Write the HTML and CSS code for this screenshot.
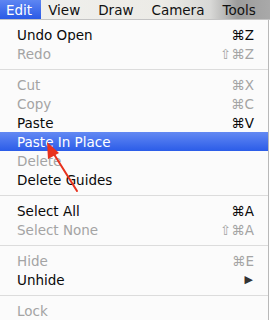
FILE: index.html
```html
<!DOCTYPE html>
<html>
<head>
<meta charset="utf-8">
<link rel="stylesheet" href="styles.css">
</head>
<body>
<div class="screen">
  <div class="menubar">
    <span class="title active">Edit</span>
    <span class="title">View</span>
    <span class="title">Draw</span>
    <span class="title">Camera</span>
    <span class="title">Tools</span>
  </div>
  <div class="menu">
    <div class="item"><span class="label">Undo Open</span><span class="key">⌘Z</span></div>
    <div class="item off"><span class="label">Redo</span><span class="key">⇧⌘Z</span></div>
    <div class="sep"></div>
    <div class="item off"><span class="label">Cut</span><span class="key">⌘X</span></div>
    <div class="item off"><span class="label">Copy</span><span class="key">⌘C</span></div>
    <div class="item"><span class="label">Paste</span><span class="key">⌘V</span></div>
    <div class="item hi"><span class="label">Paste In Place</span><span class="key"></span></div>
    <div class="item off"><span class="label">Delete</span><span class="key"></span></div>
    <div class="item"><span class="label">Delete Guides</span><span class="key"></span></div>
    <div class="sep"></div>
    <div class="item"><span class="label">Select All</span><span class="key">⌘A</span></div>
    <div class="item off"><span class="label">Select None</span><span class="key">⇧⌘A</span></div>
    <div class="sep"></div>
    <div class="item off"><span class="label">Hide</span><span class="key">⌘E</span></div>
    <div class="item"><span class="label">Unhide</span><span class="key sub">▶</span></div>
    <div class="sep"></div>
    <div class="item off"><span class="label">Lock</span><span class="key"></span></div>
  </div>
  <svg class="arrow" width="270" height="320" viewBox="0 0 270 320">
    <line x1="77" y1="191" x2="52" y2="151" stroke="#e8321e" stroke-width="2" stroke-linecap="round"/>
    <polygon points="47,142 59,153 48,159" fill="#e8321e"/>
  </svg>
</div>
</body>
</html>
```
FILE: styles.css
```css
html, body {
  margin: 0;
  padding: 0;
  background: #ffffff;
}
.screen {
  position: relative;
  width: 270px;
  height: 320px;
  overflow: hidden;
  font-family: "DejaVu Sans", "Liberation Sans", sans-serif;
  font-size: 13.5px;
}
.menubar {
  display: flex;
  height: 20px;
  align-items: stretch;
  background: linear-gradient(to right, #f1f1ef 0%, #ecebe6 60%, #d8d8d6 78%, #9c9c9c 88%, #a9a9a9 100%);
  border-bottom: 1px solid #c4c4c4;
  box-sizing: border-box;
}
.title {
  display: flex;
  align-items: center;
  padding: 0 9px;
  color: #111;
  line-height: 20px;
}
.title.active {
  color: #fff;
  padding: 0 9px 0 6px;
  margin-right: -2px;
  background: linear-gradient(#5e86f2, #2a5ae6);
}
.menu {
  display: flex;
  flex-direction: column;
  padding-top: 5px;
  background: #fbfbfb;
  border-right: 1px solid #b8b8b8;
  width: 268px;
  height: 300px;
}
.item {
  display: flex;
  justify-content: space-between;
  align-items: center;
  height: 19px;
  padding: 0 14px 0 17px;
  color: #0a0a0a;
  flex: none;
}
.item.off {
  color: #a4a4a4;
}
.item.hi {
  color: #fff;
  background: linear-gradient(#6389f3, #2b5ce8);
}
.key.sub {
  font-size: 11px;
  color: #333;
  padding-right: 1px;
}
.sep {
  height: 12px;
  flex: none;
  display: flex;
  align-items: center;
}
.sep::before {
  content: "";
  display: block;
  width: 100%;
  height: 1px;
  background: #dcdcdc;
}
.arrow {
  position: absolute;
  left: 0;
  top: 0;
  pointer-events: none;
}
```
